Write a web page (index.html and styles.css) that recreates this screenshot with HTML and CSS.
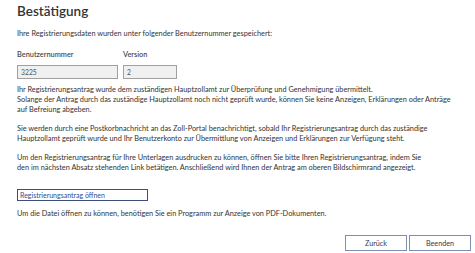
FILE: index.html
```html
<!DOCTYPE html>
<html lang="de">
<head>
<meta charset="utf-8">
<link rel="stylesheet" href="styles.css">
</head>
<body>
<div class="page">
  <h1 class="title">Bestätigung</h1>
  <p class="intro">Ihre Registrierungsdaten wurden unter folgender Benutzernummer gespeichert:</p>
  <div class="fields">
    <div class="field">
      <label class="label">Benutzernummer</label>
      <div class="input wide">3225</div>
    </div>
    <div class="field">
      <label class="label">Version</label>
      <div class="input narrow">2</div>
    </div>
  </div>
  <div class="text">
    <p class="para">Ihr Registrierungsantrag wurde dem zuständigen Hauptzollamt zur Überprüfung und Genehmigung übermittelt.<br>Solange der Antrag durch das zuständige Hauptzollamt noch nicht geprüft wurde, können Sie keine Anzeigen, Erklärungen oder Anträge auf Befreiung abgeben.</p>
    <p class="para">Sie werden durch eine Postkorbnachricht an das Zoll-Portal benachrichtigt, sobald Ihr Registrierungsantrag durch das zuständige Hauptzollamt geprüft wurde und Ihr Benutzerkonto zur Übermittlung von Anzeigen und Erklärungen zur Verfügung steht.</p>
    <p class="para">Um den Registrierungsantrag für Ihre Unterlagen ausdrucken zu können, öffnen Sie bitte Ihren Registrierungsantrag, indem Sie<br>den im nächsten Absatz stehenden Link betätigen. Anschließend wird Ihnen der Antrag am oberen Bildschirmrand angezeigt.</p>
  </div>
  <a class="link-box" href="#">Registrierungsantrag öffnen</a>
  <p class="note">Um die Datei öffnen zu können, benötigen Sie ein Programm zur Anzeige von PDF-Dokumenten.</p>
  <div class="actions">
    <button class="btn">Zurück</button>
    <button class="btn">Beenden</button>
  </div>
</div>
</body>
</html>
```
FILE: styles.css
```css
html, body {
  margin: 0;
  padding: 0;
  background: #ffffff;
}
.page {
  width: 475px;
  height: 253px;
  box-sizing: border-box;
  padding: 2px 4px 0 17px;
  font-family: Lato, "Open Sans", sans-serif;
  font-size: 7.35px;
  line-height: 10px;
  color: #333333;
  display: flex;
  flex-direction: column;
}
.title {
  margin: 0;
  font-size: 13.5px;
  line-height: 18px;
  font-weight: 600;
  color: #333333;
}
.intro {
  margin: 9px 0 0 0;
}
.fields {
  display: flex;
  gap: 5px;
  margin-top: 11px;
}
.field {
  display: flex;
  flex-direction: column;
}
.label {
  font-weight: 600;
  color: #4a4a4a;
  line-height: 10px;
}
.input {
  margin-top: 5px;
  height: 14px;
  box-sizing: border-box;
  border: 1px solid #a0a0a0;
  background: #f0f0f0;
  color: #555555;
  padding: 0 3px;
  line-height: 12px;
  font-size: 6.8px;
}
.wide { width: 101px; }
.narrow { width: 54px; }
.text {
  width: 440px;
}
.para {
  margin: 6px 0 0 0;
}
.para + .para {
  margin-top: 9px;
}
.link-box {
  margin-top: 16px;
  width: 131px;
  height: 12px;
  box-sizing: border-box;
  border: 1px solid #3d4f78;
  color: #2f4c8f;
  text-decoration: none;
  padding: 0 2px;
  line-height: 10px;
  font-size: 7px;
}
.note {
  margin: 8px 0 0 0;
}
.actions {
  display: flex;
  justify-content: flex-end;
  gap: 2px;
  margin-top: 16px;
}
.btn {
  width: 62px;
  height: 16px;
  border: 1px solid #7d8fb0;
  border-radius: 0;
  background: #ffffff;
  font-family: Lato, "Open Sans", sans-serif;
  font-size: 7.2px;
  color: #333a55;
  padding: 0;
}
```
